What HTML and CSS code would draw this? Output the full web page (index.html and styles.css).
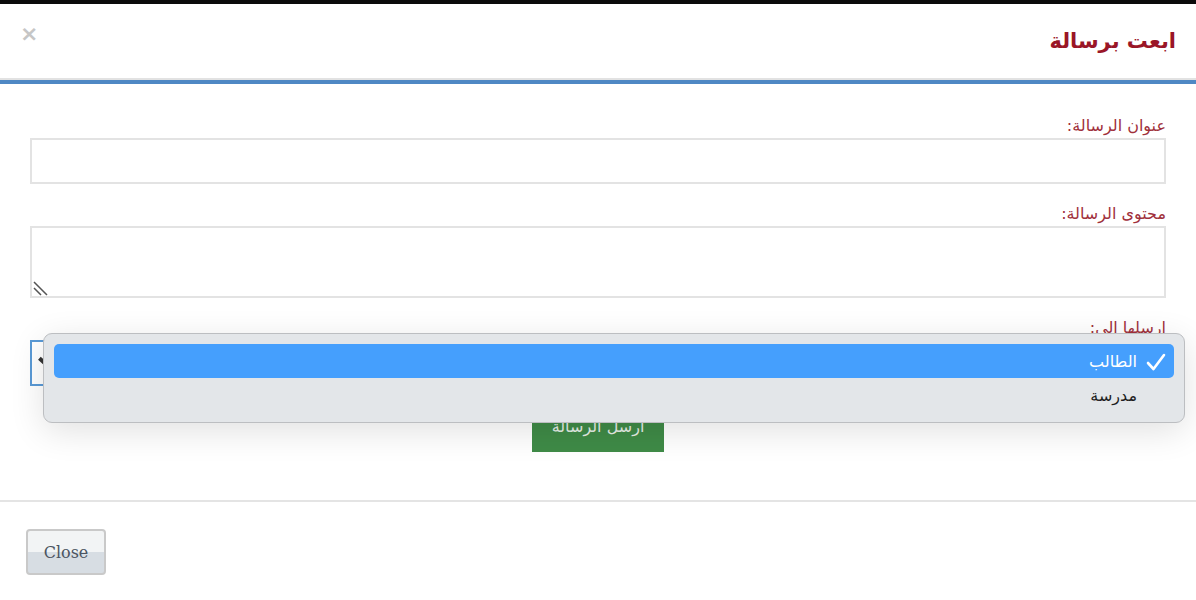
FILE: index.html
```html
<!DOCTYPE html>
<html lang="ar" dir="rtl">
<head>
<meta charset="utf-8">
<title>ابعت برسالة</title>
<link rel="stylesheet" href="styles.css">
</head>
<body>
<div class="modal">
  <div class="modal-header">
    <h4 class="modal-title">ابعت برسالة</h4>
    <span class="close">×</span>
  </div>
  <div class="modal-body">
    <div class="group">
      <label class="lbl">عنوان الرسالة:</label>
      <div class="field input"></div>
    </div>
    <div class="group">
      <label class="lbl">محتوى الرسالة:</label>
      <div class="field textarea">
        <svg class="grip" width="16" height="16" viewBox="0 0 16 16"><path d="M2 2 L15 15 M2 8 L9 15" stroke="#555" stroke-width="1.5" fill="none"/></svg>
      </div>
    </div>
    <div class="group">
      <label class="lbl">ارسلها الى:</label>
      <div class="field select"><span class="chev"></span></div>
    </div>
    <div class="actions">
      <button class="send">ارسل الرسالة</button>
    </div>
    <div class="menu">
      <div class="opt sel">
        <svg class="check" width="20" height="18" viewBox="0 0 20 18"><path d="M2 10 L7.5 16 L18 2" stroke="#fff" stroke-width="2.6" fill="none" stroke-linecap="round" stroke-linejoin="round"/></svg>
        <span>الطالب</span>
      </div>
      <div class="opt"><span>مدرسة</span></div>
    </div>
  </div>
  <div class="modal-footer">
    <button class="btn-close">Close</button>
  </div>
</div>
</body>
</html>
```
FILE: styles.css
```css
html, body {
  margin: 0;
  padding: 0;
  background: #fff;
}
body {
  border-top: 4px solid #0b0b0b;
  font-family: "DejaVu Sans", sans-serif;
}
.modal {
  width: 1196px;
}
.modal-header {
  height: 76px;
  display: flex;
  align-items: center;
  justify-content: space-between;
  padding: 0 20px 0 20px;
  border-bottom: 2px solid #e2e2e2;
  box-shadow: 0 4px 0 #4f88c4;
  box-sizing: border-box;
}
.modal-title {
  margin: 0;
  font-size: 21px;
  font-weight: bold;
  color: #9a1627;
}
.close {
  font-family: "DejaVu Sans", sans-serif;
  font-size: 22px;
  font-weight: bold;
  color: #c6c6c6;
  line-height: 1;
  margin-top: -14px;
}
.modal-body {
  position: relative;
  margin-top: 4px;
  padding: 32px 30px 48px 30px;
}
.group {
  margin-bottom: 20px;
}
.lbl {
  display: block;
  height: 20px;
  line-height: 20px;
  margin-bottom: 2px;
  font-size: 16px;
  color: #a0303b;
}
.field {
  box-sizing: border-box;
  border: 2px solid #e3e3e3;
  background: #fff;
  width: 100%;
  position: relative;
}
.input { height: 46px; }
.textarea { height: 72px; }
.grip {
  position: absolute;
  left: 0;
  bottom: 0;
}
.select {
  height: 46px;
  border: 2px solid #5a9ad6;
  margin-top: 2px;
  width: 100%;
}
.chev {
  position: absolute;
  left: 6px;
  top: 18px;
  width: 11px;
  height: 4px;
  background: #333;
  transform: rotate(42deg);
}
.actions {
  display: flex;
  justify-content: center;
}
.send {
  height: 46px;
  width: 132px;
  border: none;
  background: #3f8b47;
  color: #e6eee6;
  font-family: "DejaVu Sans", sans-serif;
  font-size: 16px;
  padding: 0;
  padding-bottom: 6px;
}
.menu {
  position: absolute;
  left: 43px;
  top: 249px;
  width: 1142px;
  height: 90px;
  box-sizing: border-box;
  background: #e3e6e9;
  border: 1px solid #bcbec1;
  border-radius: 9px;
  padding: 10px 10px;
  box-shadow: 0 8px 34px rgba(0, 0, 0, 0.12);
}
.opt {
  height: 34px;
  display: flex;
  align-items: center;
  padding-right: 37px;
  font-size: 16px;
  color: #1e1e1e;
  border-radius: 5px;
  position: relative;
}
.opt.sel {
  background: #459ffd;
  color: #fff;
}
.check {
  position: absolute;
  right: 8px;
  top: 9px;
}
.modal-footer {
  border-top: 2px solid #e4e4e4;
  padding: 27px 26px 26px 26px;
  display: flex;
  justify-content: flex-end;
}
.btn-close {
  width: 80px;
  height: 46px;
  box-sizing: border-box;
  border: 2px solid #c9c9c9;
  border-radius: 4px;
  background: linear-gradient(#f2f4f5 0%, #f2f4f5 50%, #d7dde3 50%, #d7dde3 100%);
  font-family: "DejaVu Serif", serif;
  font-size: 16px;
  color: #4b5461;
  padding: 0;
}
```
